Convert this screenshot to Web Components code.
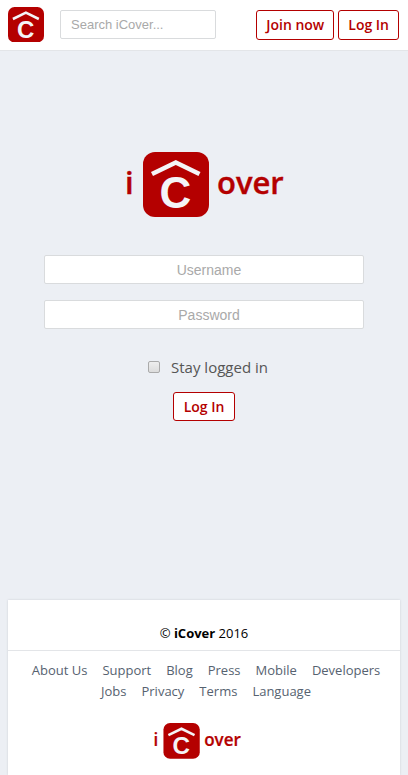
<!DOCTYPE html>
<html lang="en">
<head>
<meta charset="utf-8">
<meta name="viewport" content="width=device-width, initial-scale=1">
<title>iCover</title>
<style>
  :root { --brand: #b40000; --page: #eceff4; --line: #d9dbdd; --ui: "Open Sans", "Noto Sans", sans-serif; }
  body { margin: 0; background: var(--page); font: 14px/20px var(--ui); color: #000; }
</style>
</head>
<body>
<cover-page>
  <cover-header slot="header"></cover-header>
  <cover-login></cover-login>
  <cover-footer slot="footer"></cover-footer>
</cover-page>

<script>
const mark = `
  <rect width="66" height="65" rx="12" fill="#b40000"/>
  <path d="M9 22 32.8 10.5 56.5 22" fill="none" stroke="#f4f4f7" stroke-width="4.6"/>
  <text x="32.5" y="56" text-anchor="middle" font-family="Liberation Sans, sans-serif" font-weight="700" font-size="44" fill="#f4f4f7">C</text>`;

const define = (name, html, setup) => customElements.define(name, class extends HTMLElement {
  constructor() {
    super();
    this.attachShadow({ mode: "open" }).innerHTML = html;
    if (setup) setup(this);
  }
});

define("cover-page", `
  <style>
    :host { display: flex; flex-direction: column; min-height: 100vh; }
    main { flex: 1; }
  </style>
  <slot name="header"></slot><main><slot></slot></main><slot name="footer"></slot>`);

define("cover-mark", `
  <style>:host { display: block; width: 36px; } svg { display: block; width: 100%; }</style>
  <svg viewBox="0 0 66 65" role="img" aria-label="iCover">${mark}</svg>`);

define("cover-wordmark", `
  <style>:host { display: block; } svg { display: block; width: 100%; overflow: visible; }</style>
  <svg viewBox="-2 0 160 66" role="img" aria-label="iCover">
    <g font-family="Open Sans, sans-serif" font-weight="600" font-size="31" fill="#b40000" stroke="#b40000" stroke-width="0.4">
      <text x="-1" y="42">i</text>
      <text x="91" y="42">over</text>
    </g>
    <g transform="translate(17 0)">${mark}</g>
  </svg>`);

define("cover-button", `
  <style>
    :host { display: block; }
    button { box-sizing: border-box; display: block; height: var(--button-height, 30px); padding: 0 var(--button-pad, 10px);
      border: 1px solid var(--brand); border-radius: 3px; background: #fff; color: var(--brand);
      font: 600 14px/20px var(--ui); white-space: nowrap; }
  </style>
  <button type="button"><slot></slot></button>`);

define("cover-field", `
  <style>
    :host { display: block; }
    input { box-sizing: border-box; display: block; width: 100%; height: 29px; margin: 0; padding: 0 0 0 10px;
      border: 1px solid var(--line); border-radius: 2px; background: #fff;
      font: var(--field-size, 14px)/20px "Liberation Sans", sans-serif; text-align: var(--field-align, center); }
    input::placeholder { color: #a9a9a9; opacity: 1; }
  </style>
  <input>`, host => {
    const input = host.shadowRoot.querySelector("input");
    input.type = host.getAttribute("type") || "text";
    input.placeholder = host.getAttribute("label");
    input.setAttribute("aria-label", host.getAttribute("label"));
  });

define("cover-header", `
  <style>
    :host { display: block; background: #fff; border-bottom: 1px solid #e3e5e8; --button-pad: 9px; }
    header { display: flex; align-items: flex-start; height: 40px; padding: 10px 9px 0 8px; }
    cover-mark { margin-top: -3px; }
    cover-field { --field-align: left; --field-size: 13px; flex: 0 1 156px; margin-left: 16px; }
    nav { display: flex; gap: 4px; margin-left: auto; }
  </style>
  <header>
    <cover-mark></cover-mark>
    <cover-field type="text" label="Search iCover..."></cover-field>
    <nav><cover-button>Join now</cover-button><cover-button>Log In</cover-button></nav>
  </header>`);

define("cover-login", `
  <style>
    :host { display: block; --button-height: 29px; }
    form { display: flex; flex-direction: column; align-items: center; padding: 101px 44px 40px; }
    cover-wordmark { width: 160px; margin-bottom: 37px; }
    cover-field { width: 100%; max-width: 320px; margin-bottom: 16px; }
    label { display: flex; align-items: center; gap: 11px; margin: 11px 0 14px; padding-left: 8px;
      font-size: 15px; line-height: 22px; color: #555; }
    input { appearance: none; box-sizing: border-box; width: 12px; height: 12px; margin: 0; border: 1px solid #aaa; border-radius: 2px;
      background: linear-gradient(#eee, #dcdcdc); }
    input:checked { background: var(--brand); }
  </style>
  <form>
    <cover-wordmark></cover-wordmark>
    <cover-field label="Username"></cover-field>
    <cover-field label="Password" type="password"></cover-field>
    <label><input type="checkbox">Stay logged in</label>
    <cover-button>Log In</cover-button>
  </form>`);

define("cover-footer", `
  <style>
    :host { display: block; margin: 0 8px; background: #fff; box-shadow: 0 0 2px #c9ced4; }
    p { margin: 0; padding: 23px 0 7px; border-bottom: 1px solid #e3e5e8; text-align: center; font-size: 13px; }
    nav { display: flex; flex-wrap: wrap; justify-content: center; column-gap: 15px; padding: 9px 16px 0 20px; }
    a { color: #566270; text-decoration: none; font-size: 13px; line-height: 21px; }
    div { display: flex; justify-content: center; padding: 21px 14px 16px 0; }
    cover-wordmark { width: 88px; }
  </style>
  <footer>
    <p>© <b>iCover</b> 2016</p>
    <nav>
      <a href="#about">About Us</a><a href="#support">Support</a><a href="#blog">Blog</a><a href="#press">Press</a>
      <a href="#mobile">Mobile</a><a href="#developers">Developers</a><a href="#jobs">Jobs</a>
      <a href="#privacy">Privacy</a><a href="#terms">Terms</a><a href="#language">Language</a>
    </nav>
    <div><cover-wordmark></cover-wordmark></div>
  </footer>`);
</script>
</body>
</html>
